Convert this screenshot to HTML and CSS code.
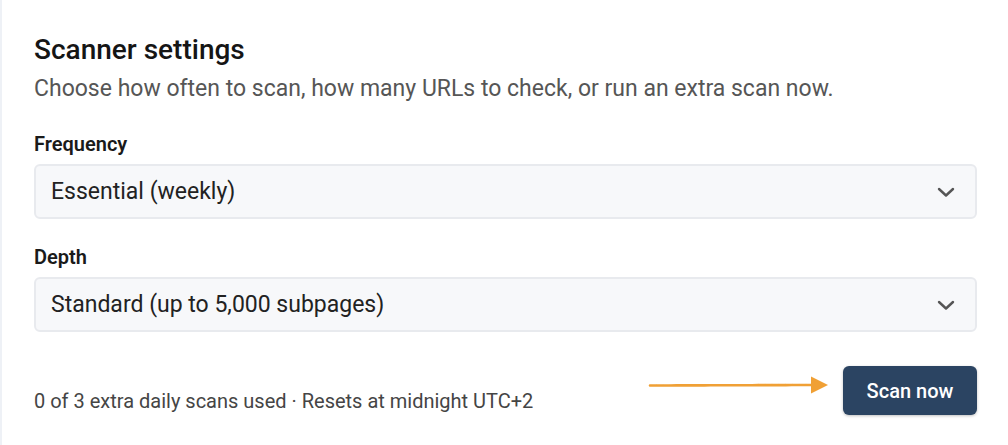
FILE: index.html
```html
<!DOCTYPE html>
<html lang="en">
<head>
<meta charset="utf-8">
<link rel="stylesheet" href="styles.css">
</head>
<body>
<section class="panel">
  <h1 class="title">Scanner settings</h1>
  <p class="subtitle">Choose how often to scan, how many URLs to check, or run an extra scan now.</p>

  <div class="field">
    <label class="label">Frequency</label>
    <div class="select">
      <span>Essential (weekly)</span>
      <svg class="chev" width="18" height="12" viewBox="0 0 18 12"><path d="M2 3 L9 9.5 L16 3" fill="none" stroke="#555" stroke-width="2.4" stroke-linecap="round" stroke-linejoin="round"/></svg>
    </div>
  </div>

  <div class="field">
    <label class="label">Depth</label>
    <div class="select">
      <span>Standard (up to 5,000 subpages)</span>
      <svg class="chev" width="18" height="12" viewBox="0 0 18 12"><path d="M2 3 L9 9.5 L16 3" fill="none" stroke="#555" stroke-width="2.4" stroke-linecap="round" stroke-linejoin="round"/></svg>
    </div>
  </div>

  <div class="footer">
    <span class="usage">0 of 3 extra daily scans used · Resets at midnight UTC+2</span>
    <div class="actions">
      <svg class="arrow" width="182" height="24" viewBox="0 0 182 24">
        <path d="M2 12.5 L166 12" stroke="#f0a035" stroke-width="2.6" stroke-linecap="round" fill="none" stroke-dasharray="6 0.8"/>
        <path d="M163 3.5 L180 12 L163 20.5 Z" fill="#f0a035"/>
      </svg>
      <button class="btn">Scan now</button>
    </div>
  </div>
</section>
</body>
</html>
```

FILE: styles.css
```css
html, body {
  margin: 0;
  padding: 0;
  background: #ffffff;
}
body {
  font-family: Roboto, "Liberation Sans", Arial, sans-serif;
  color: #1a1a1a;
}
.panel {
  border-left: 2px solid #eef1f6;
  padding: 33px 31px 30px 32px;
  height: 445px;
  box-sizing: border-box;
}
.title {
  margin: 0;
  font-size: 28px;
  font-weight: 500;
  line-height: 34px;
  color: #151515;
}
.subtitle {
  margin: 7px 0 0;
  font-size: 23px;
  line-height: 30px;
  color: #565656;
}
.field:first-of-type {
  margin-top: 28px;
}
.label {
  display: block;
  font-size: 20px;
  font-weight: 600;
  line-height: 24px;
  color: #1a1a1a;
  margin-bottom: 8px;
}
.select {
  display: flex;
  align-items: center;
  justify-content: space-between;
  height: 55px;
  box-sizing: border-box;
  background: #f7f8fa;
  border: 2px solid #e8eaee;
  border-radius: 6px;
  padding: 0 20px 0 15px;
  font-size: 23px;
  color: #222;
  margin-bottom: 26px;
}
.field:last-of-type .select {
  margin-bottom: 0;
}
.footer {
  display: flex;
  align-items: flex-end;
  justify-content: space-between;
  margin-top: 34px;
}
.usage {
  font-size: 20px;
  line-height: 28px;
  color: #454545;
}
.actions {
  display: flex;
  align-items: center;
  gap: 13px;
}
.arrow {
  margin-top: -12px;
}
.btn {
  height: 49px;
  width: 134px;
  border: none;
  border-radius: 6px;
  background: #2b4462;
  color: #fff;
  font-family: Roboto, "Liberation Sans", Arial, sans-serif;
  font-size: 20px;
  font-weight: 500;
  box-shadow: 0 1px 3px rgba(0,0,0,0.25);
}
```
